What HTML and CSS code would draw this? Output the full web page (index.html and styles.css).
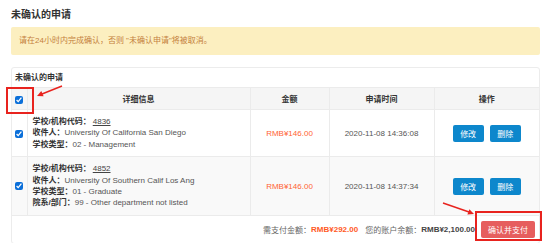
FILE: index.html
```html
<!DOCTYPE html>
<html lang="zh-CN">
<head>
    <meta charset="UTF-8">
    <title>未确认的申请</title>
    <link rel="stylesheet" href="styles.css">
</head>
<body>

<div class="page">
    <h2 class="page-title">未确认的申请</h2>

    <div class="alert-warning">请在24小时内完成确认，否则 "未确认申请"将被取消。</div>

    <div class="panel">
        <div class="panel-heading">未确认的申请</div>
        <table class="order-table">
            <colgroup>
                <col class="col-check">
                <col class="col-detail">
                <col class="col-amount">
                <col class="col-time">
                <col class="col-action">
            </colgroup>
            <thead>
                <tr>
                    <th><input type="checkbox" checked></th>
                    <th>详细信息</th>
                    <th>金额</th>
                    <th>申请时间</th>
                    <th>操作</th>
                </tr>
            </thead>
            <tbody>
                <tr>
                    <td class="cell-check"><input type="checkbox" checked></td>
                    <td class="cell-detail">
                        <div><b>学校/机构代码：</b><a href="#">4836</a></div>
                        <div><b>收件人：</b>University Of California San Diego</div>
                        <div><b>学校类型：</b>02 - Management</div>
                    </td>
                    <td class="cell-amount">RMB¥146.00</td>
                    <td class="cell-time">2020-11-08 14:36:08</td>
                    <td class="cell-action">
                        <button class="btn-blue">修改</button>
                        <button class="btn-blue">删除</button>
                    </td>
                </tr>
                <tr class="row-alt">
                    <td class="cell-check"><input type="checkbox" checked></td>
                    <td class="cell-detail">
                        <div><b>学校/机构代码：</b><a href="#">4852</a></div>
                        <div><b>收件人：</b>University Of Southern Calif Los Ang</div>
                        <div><b>学校类型：</b>01 - Graduate</div>
                        <div><b>院系/部门：</b>99 - Other department not listed</div>
                    </td>
                    <td class="cell-amount">RMB¥146.00</td>
                    <td class="cell-time">2020-11-08 14:37:34</td>
                    <td class="cell-action">
                        <button class="btn-blue">修改</button>
                        <button class="btn-blue">删除</button>
                    </td>
                </tr>
            </tbody>
        </table>
        <div class="panel-footer">
            <span>需支付金额：</span>
            <span class="total-pay">RMB¥292.00</span>
            <span class="balance-label">您的账户余额：</span>
            <span class="balance">RMB¥2,100.00</span>
            <button class="btn-confirm">确认并支付</button>
        </div>
    </div>
</div>

<!-- annotation marks drawn over the screenshot -->
<svg class="marks" width="554" height="243" viewBox="0 0 554 243">
    <rect x="7" y="88" width="26" height="25" fill="none" stroke="#e8231e" stroke-width="2"/>
    <line x1="62" y1="86" x2="42" y2="94" stroke="#e8231e" stroke-width="1.4"/>
    <polygon points="37,96 43.6,96.3 41.3,91" fill="#e8231e"/>
    <rect x="476" y="212" width="65" height="28" fill="none" stroke="#e8231e" stroke-width="2"/>
    <line x1="443" y1="203" x2="469" y2="212" stroke="#e8231e" stroke-width="1.4"/>
    <polygon points="474,214 467.4,214.5 469.4,209.3" fill="#e8231e"/>
</svg>

</body>
</html>
```

FILE: styles.css
```css
body {
    margin: 0;
    padding: 0;
    background-color: #fff;
    font-family: "Liberation Sans", "Noto Sans CJK SC", sans-serif;
    color: #555;
    font-size: 8px;
}
.page {
    padding: 9px 14px 0 11px;
}
.page-title {
    margin: 0 0 6px 0;
    font-size: 10px;
    line-height: 12px;
    color: #333;
    font-weight: bold;
}
.alert-warning {
    height: 28px;
    line-height: 28px;
    padding-left: 8px;
    background-color: #fcefc0;
    color: #c4803d;
    border-radius: 2px;
    font-size: 8px;
}
.panel {
    margin-top: 12px;
    border: 1px solid #ececec;
    border-radius: 3px;
}
.panel-heading {
    height: 19px;
    line-height: 20px;
    padding-left: 3px;
    font-weight: bold;
    color: #333;
}
.order-table {
    width: 100%;
    table-layout: fixed;
    border-collapse: collapse;
}
.col-check { width: 15px; }
.col-detail { width: 223px; }
.col-amount { width: 79px; }
.col-time { width: 105px; }
.col-action { width: 105px; }
.order-table th,
.order-table td {
    border: 1px solid #ebebeb;
    text-align: center;
    padding: 0;
}
.order-table th:first-child,
.order-table td:first-child {
    border-left: none;
}
.order-table th:last-child,
.order-table td:last-child {
    border-right: none;
}
.order-table th {
    height: 21px;
    background-color: #f5f5f5;
    color: #333;
    font-weight: bold;
}
.order-table input[type="checkbox"] {
    width: 8px;
    height: 8px;
    margin: 0;
    vertical-align: middle;
    accent-color: #0b6fd9;
}
.order-table th input[type="checkbox"] {
    margin-top: 3px;
}
.row-alt td {
    background-color: #f9f9f9;
}
.cell-detail {
    text-align: left !important;
    padding: 6px 5px !important;
    line-height: 11.4px;
}
.cell-detail b {
    color: #333;
    font-weight: bold;
}
.cell-detail a {
    color: #444;
    text-decoration: underline;
    margin-left: 2px;
}
.cell-amount {
    color: #ff6435;
}
.cell-time {
    color: #555;
}
.cell-action {
    white-space: nowrap;
}
.btn-blue {
    width: 31px;
    height: 17px;
    padding: 0;
    margin: 0 2px;
    border: none;
    border-radius: 2px;
    background-color: #0d87cc;
    color: #fff;
    font-family: inherit;
    font-size: 8px;
    cursor: pointer;
}
.panel-footer {
    height: 27px;
    display: flex;
    justify-content: flex-end;
    align-items: center;
    padding-right: 4px;
    color: #666;
}
.total-pay {
    color: #ff5a1f;
    font-weight: bold;
}
.balance-label {
    margin-left: 7px;
}
.balance {
    color: #444;
    font-weight: bold;
}
.btn-confirm {
    width: 54px;
    height: 17px;
    margin-left: 6px;
    padding: 0;
    border: none;
    border-radius: 2px;
    background-color: #e65e5e;
    color: #fff;
    font-family: inherit;
    font-size: 8px;
    cursor: pointer;
}
.marks {
    position: absolute;
    left: 0;
    top: 0;
    pointer-events: none;
}
```
